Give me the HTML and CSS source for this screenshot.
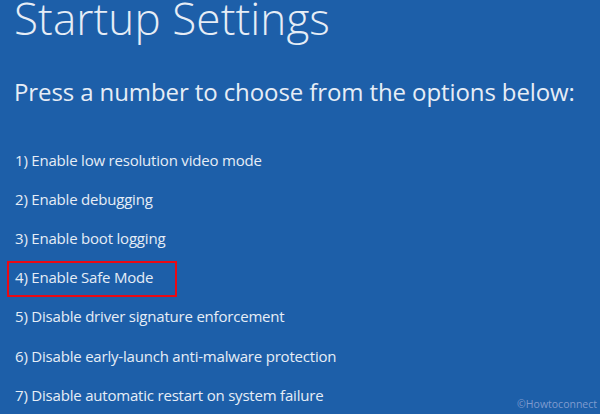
FILE: index.html
```html
<!DOCTYPE html>
<html>
<head>
<meta charset="utf-8">
<link rel="stylesheet" href="styles.css">
</head>
<body>
<div class="screen">
  <h1 class="title">Startup Settings</h1>
  <p class="prompt">Press a number to choose from the options below:</p>
  <ul class="options">
    <li class="option">1) Enable low resolution video mode</li>
    <li class="option">2) Enable debugging</li>
    <li class="option">3) Enable boot logging</li>
    <li class="option highlight">4) Enable Safe Mode</li>
    <li class="option">5) Disable driver signature enforcement</li>
    <li class="option">6) Disable early-launch anti-malware protection</li>
    <li class="option">7) Disable automatic restart on system failure</li>
  </ul>
  <div class="watermark">©Howtoconnect</div>
</div>
</body>
</html>
```
FILE: styles.css
```css
html, body {
  margin: 0;
  padding: 0;
}
body {
  width: 600px;
  height: 414px;
  overflow: hidden;
  background: #1d5fa9;
}
.screen {
  position: relative;
  width: 600px;
  height: 414px;
  background: #1d5fa9;
  color: #e6edf6;
  font-family: "Open Sans", "Noto Sans", sans-serif;
  overflow: hidden;
}
.title {
  margin: 0;
  padding: 0 0 0 14px;
  font-weight: 300;
  font-size: 44px;
  line-height: 36px;
  letter-spacing: 0.1px;
  white-space: nowrap;
}
.prompt {
  margin: 41px 0 0 14px;
  font-weight: 400;
  font-size: 24px;
  line-height: 30px;
  letter-spacing: -0.1px;
  white-space: nowrap;
}
.options {
  list-style: none;
  margin: 33px 0 0 0;
  padding: 0;
  display: flex;
  flex-direction: column;
}
.option {
  position: relative;
  height: 39.2px;
  display: flex;
  align-items: center;
  padding-left: 15px;
  font-size: 15px;
  letter-spacing: -0.2px;
  white-space: nowrap;
}
.option.highlight::before {
  content: "";
  position: absolute;
  left: 7px;
  top: 3px;
  width: 170px;
  height: 36px;
  box-sizing: border-box;
  border: 2.5px solid #ea0a14;
}
.watermark {
  position: absolute;
  right: 3px;
  bottom: 5px;
  font-size: 10.5px;
  line-height: 10px;
  color: #7f9bcf;
}
```
